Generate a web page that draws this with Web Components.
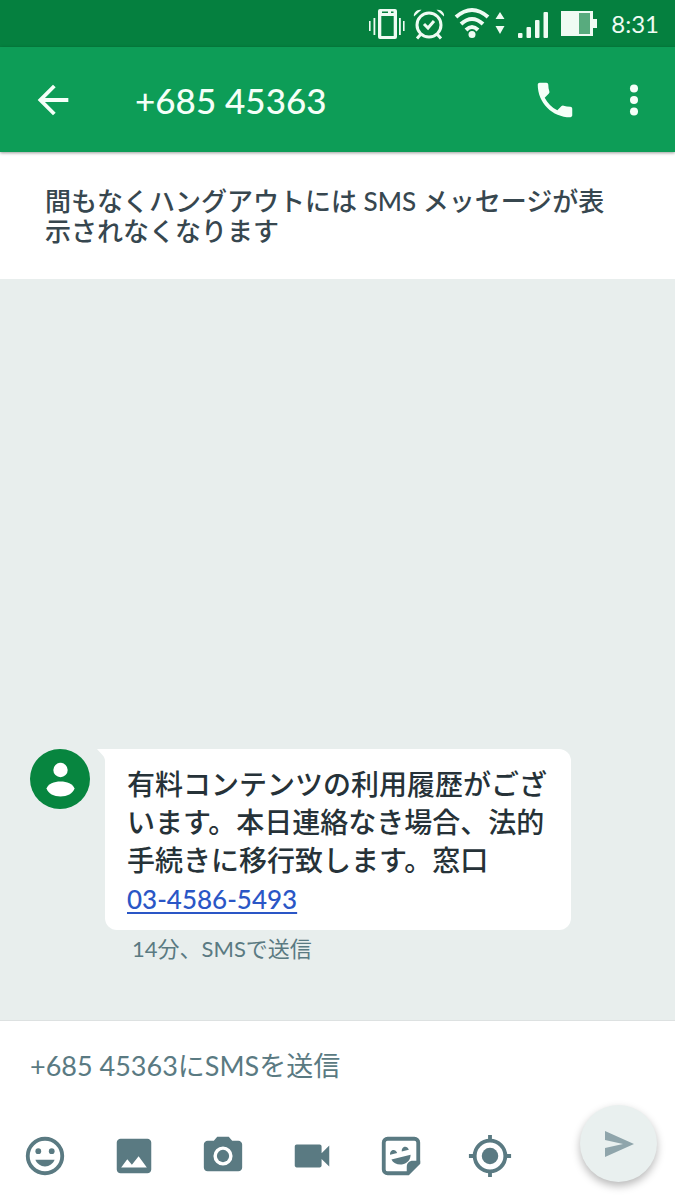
<!DOCTYPE html>
<html lang="ja">
<head>
<meta charset="utf-8">
<meta name="viewport" content="width=device-width, initial-scale=1">
<title>+685 45363</title>
<style>
    body {
        margin: 0;
        font-family: Lato, "Noto Sans CJK JP", sans-serif;
        color: #263238;
        --green: #0d9d57;
        --green-dark: #05803f;
        --slate: #5a7a82;
        --canvas: #e8eeed;
    }
</style>
</head>
<body>
<sms-screen>
    <status-bar slot="top" time="8:31"></status-bar>
    <app-bar slot="top">+685 45363</app-bar>
    <notice-banner slot="top">間もなくハングアウトには SMS メッセージが表示されなくなります</notice-banner>
    <chat-message meta="14分、SMSで送信">有料コンテンツの利用履歴がございます。本日連絡なき場合、法的手続きに移行致します。窓口 <a href="tel:0345865493">03-4586-5493</a></chat-message>
    <message-composer slot="bottom" hint="+685 45363にSMSを送信"></message-composer>
</sms-screen>

<script>
const icons = {
    back: `<path d="M20 11H7.8l5.6-5.6L12 4l-8 8 8 8 1.400-1.400L7.800 13H20z"/>`,
    call: `<path d="M6.620 10.790c1.440 2.830 3.760 5.140 6.590 6.590l2.200-2.200c.27-.27.67-.36 1.020-.24 1.120.37 2.330.57 3.570.57.55 0 1 .45 1 1V20c0 .55-.45 1-1 1-9.390 0-17-7.610-17-17 0-.55.45-1 1-1h3.500c.55 0 1 .45 1 1 0 1.250.2 2.450.57 3.570.11.35.03.74-.25 1.020z"/>`,
    more: `<circle cx="12" cy="6" r="2.1"/><circle cx="12" cy="12" r="2.1"/><circle cx="12" cy="18" r="2.1"/>`,
    emoji: `<circle cx="12" cy="12" r="9" fill="none" stroke="currentColor" stroke-width="2"/><circle cx="8.500" cy="9.500" r="1.500"/><circle cx="15.500" cy="9.500" r="1.500"/><path d="M7 14h10c-.8 2-2.700 3.500-5 3.500S7.800 16 7 14z"/>`,
    image: `<path d="M21 19V5c0-1.100-.9-2-2-2H5c-1.100 0-2 .9-2 2v14c0 1.100.9 2 2 2h14c1.100 0 2-.9 2-2zM5.300 18l3.200-4.300 2.400 2.900 3.500-4.500 4.300 5.900z"/>`,
    camera: `<circle cx="12" cy="12" r="3.200"/><path fill-rule="evenodd" d="M9 2 7.200 4H4c-1.100 0-2 .9-2 2v12c0 1.100.9 2 2 2h16c1.100 0 2-.9 2-2V6c0-1.100-.9-2-2-2h-3.200L15 2zM12 17a5 5 0 1 1 0-10 5 5 0 0 1 0 10z"/>`,
    video: `<path d="M17 10.500V7c0-.55-.45-1-1-1H4c-.55 0-1 .45-1 1v10c0 .55.45 1 1 1h12c.55 0 1-.45 1-1v-3.500l4 4v-11z"/>`,
    sticker: `<path d="M5 3h14a2 2 0 0 1 2 2v10.500L15.500 21H5a2 2 0 0 1-2-2V5a2 2 0 0 1 2-2z" fill="none" stroke="currentColor" stroke-width="2"/><path d="M15 21.500v-3.800c0-2 1.200-3.200 3.200-3.200h3.800v1.500L16 22z"/><path d="M6.300 11.300c-.3-2.600 2.800-3.500 3.700-.9zM12.400 9.600c-.3-2.600 2.800-3.500 3.700-.9zM7 13.800l10-2.400c0 2.600-1.600 4.400-4 4.900-2.400.5-5-.4-6-2.500z"/>`,
    location: `<circle cx="12" cy="12" r="4.3"/><circle cx="12" cy="12" r="8" fill="none" stroke="currentColor" stroke-width="2"/><path d="M11 1h2v3h-2zM11 20h2v3h-2zM1 11h3v2H1zM20 11h3v2h-3z"/>`
}

// size in pixels, every glyph is drawn on a 24 unit grid
function icon(name, size = 46) {
    return `<svg viewBox="0 0 24 24" width="${size}" height="${size}" fill="currentColor" aria-hidden="true">${icons[name]}</svg>`
}

const buttonStyle = `
    button {
        display: block;
        margin: 0;
        padding: 0;
        border: 0;
        background: none;
        color: inherit;
        font: inherit;
        cursor: pointer;
    }
    svg {
        display: block;
    }
`

class SmsScreen extends HTMLElement {
    constructor() {
        super()
        this.root = this.attachShadow({ mode: "open" })
        this.root.innerHTML = `
            <style>
            :host {
                display: flex;
                flex-direction: column;
                min-height: 100vh;
                background: var(--canvas);
            }
            main {
                flex: 1;
                display: flex;
                flex-direction: column;
                justify-content: flex-end;
                padding: 24px 30px 56px;
            }
            </style>
            <slot name="top"></slot>
            <main><slot></slot></main>
            <slot name="bottom"></slot>
        `
    }
}

class StatusBar extends HTMLElement {
    constructor() {
        super()
        this.root = this.attachShadow({ mode: "open" })
        this.root.innerHTML = `
            <style>
            :host {
                display: flex;
                align-items: center;
                justify-content: flex-end;
                height: 47px;
                padding: 0 16px;
                background: var(--green-dark);
                color: #effbf3;
                font-size: 24px;
                line-height: 30px;
            }
            .icons {
                display: flex;
                gap: 8px;
                margin-right: 14px;
            }
            svg {
                display: block;
            }
            </style>
            <div class="icons">
                <svg width="36" height="34" viewBox="0 0 36 34" fill="currentColor" aria-hidden="true">
                    <path fill-rule="evenodd" d="M11 2h15a2 2 0 0 1 2 2v26a2 2 0 0 1-2 2H11a2 2 0 0 1-2-2V4a2 2 0 0 1 2-2zM12.300 9v20h12.400V9zM13 4.500V6h6V4.500zM22 4.500V6h2.500V4.500z"/>
                    <path d="M0 14h1.600v10H0zM4.500 11h1.800v17H4.500zM30 11h1.800v17H30zM34 14h1.600v10H34z"/>
                </svg>
                <svg width="32" height="34" viewBox="1 0 32 34" fill="none" stroke="currentColor" stroke-width="3" aria-hidden="true">
                    <circle cx="17" cy="18" r="12"/>
                    <path d="M12 17l4 4 6-7M9 27l-4 4.500M25 27l4 4.500"/>
                    <path d="M2 9.500C1 6 5 2 9.500 2.800zM32 9.500c1-3.500-3-7.500-7.500-6.700z" fill="currentColor" stroke="none"/>
                </svg>
                <svg width="54" height="34" viewBox="0 0 54 34" fill="none" stroke="currentColor" stroke-width="4" aria-hidden="true">
                    <path d="M3 10q16-14 32 0M8 17q11-10 22 0M13 23q6-6 12 0"/>
                    <path d="M42.500 12l4.500-7 4.500 7zM42.500 19l4.500 8 4.500-8z" fill="currentColor" stroke="none"/>
                    <circle cx="19" cy="27.500" r="3.500" fill="currentColor" stroke="none"/>
                </svg>
                <svg width="34" height="34" viewBox="0 0 34 34" fill="currentColor" aria-hidden="true">
                    <rect x="3" y="26" width="4.500" height="5" rx="1"/>
                    <rect x="11.500" y="20" width="4.500" height="11" rx="1"/>
                    <rect x="20" y="13" width="4.500" height="18" rx="1"/>
                    <rect x="28.500" y="5" width="4.500" height="26" rx="1"/>
                </svg>
                <svg width="40" height="34" viewBox="0 0 40 34" fill="currentColor" aria-hidden="true">
                    <path d="M4 4h32v8h4v9h-4v8H4z"/>
                    <path d="M22 6h11v21H22z" fill="#58ab7e"/>
                </svg>
            </div>
            <time>${this.getAttribute("time")}</time>
        `
    }
}

class AppBar extends HTMLElement {
    constructor() {
        super()
        this.root = this.attachShadow({ mode: "open" })
        this.root.innerHTML = `
            <style>
            ${buttonStyle}
            :host {
                display: flex;
                align-items: center;
                height: 105px;
                padding: 0 18px 0 30px;
                box-sizing: border-box;
                background: var(--green);
                box-shadow: 0 1px 3px rgba(0, 0, 0, .4);
                position: relative;
                color: #f4fff8;
            }
            h1 {
                flex: 1;
                margin: 0 0 0 59px;
                font-size: 35px;
                font-weight: 500;
                line-height: 44px;
            }
            .actions {
                display: flex;
                gap: 33px;
            }
            </style>
            <button type="button" aria-label="戻る">${icon("back")}</button>
            <h1><slot></slot></h1>
            <div class="actions">
                <button type="button" aria-label="電話をかける">${icon("call")}</button>
                <button type="button" aria-label="その他">${icon("more")}</button>
            </div>
        `
    }
}

class NoticeBanner extends HTMLElement {
    constructor() {
        super()
        this.root = this.attachShadow({ mode: "open" })
        this.root.innerHTML = `
            <style>
            :host {
                display: block;
                padding: 34px 60px 33px 45px;
                background: #fff;
                color: #37474f;
                font-size: 26px;
                font-weight: 500;
                line-height: 30px;
            }
            </style>
            <slot></slot>
        `
    }
}

class ChatMessage extends HTMLElement {
    constructor() {
        super()
        this.root = this.attachShadow({ mode: "open" })
        this.root.innerHTML = `
            <style>
            :host {
                display: flex;
                align-items: flex-start;
                gap: 15px;
            }
            .avatar {
                display: block;
                flex: none;
            }
            .bubble {
                position: relative;
                max-width: 422px;
                padding: 16px 22px 12px;
                border-radius: 0 12px 12px 12px;
                background: #fff;
                font-size: 28px;
                font-weight: 500;
                line-height: 38px;
            }
            .tail {
                position: absolute;
                top: 0;
                right: 100%;
            }
            ::slotted(a) {
                color: #2a56c6;
                font-size: 26px;
                white-space: nowrap;
                text-decoration-thickness: 2px;
                text-underline-offset: 3px;
            }
            .meta {
                margin: 4px 0 0 27px;
                color: var(--slate);
                font-size: 22px;
                line-height: 30px;
            }
            </style>
            <svg class="avatar" width="60" height="60" viewBox="0 0 60 60" aria-hidden="true">
                <circle cx="30" cy="30" r="30" fill="#07853f"/>
                <circle cx="30.500" cy="21" r="7.200" fill="#fff"/>
                <path d="M16.500 39.500C18 35 24 32.500 30.500 32.500s12.500 2.500 14 7c-1.500 5-7.500 8-14 8s-12.500-3-14-8z" fill="#fff"/>
            </svg>
            <div>
                <div class="bubble">
                    <svg class="tail" width="8" height="12" viewBox="0 0 8 12" aria-hidden="true"><path d="M0 0h8v12C8 7 4 5 0 0z" fill="#fff"/></svg>
                    <slot></slot>
                </div>
                <div class="meta">${this.getAttribute("meta")}</div>
            </div>
        `
    }
}

class MessageComposer extends HTMLElement {
    constructor() {
        super()
        this.root = this.attachShadow({ mode: "open" })
        this.root.innerHTML = `
            <style>
            ${buttonStyle}
            :host {
                display: flex;
                align-items: flex-end;
                padding: 14px 18px 0 22px;
                border-top: 1px solid #dde1e1;
                background: #fff;
                color: var(--slate);
            }
            .main {
                flex: 1;
                min-width: 0;
                padding-bottom: 21px;
            }
            input {
                display: block;
                width: 100%;
                height: 60px;
                box-sizing: border-box;
                margin: 0 0 38px;
                padding: 0 8px;
                border: 0;
                outline: 0;
                background: none;
                color: #263238;
                font: inherit;
                font-size: 27px;
            }
            input::placeholder {
                color: var(--slate);
                opacity: 1;
            }
            .tools {
                display: flex;
                gap: 43px;
            }
            .send {
                display: grid;
                place-items: center;
                flex: none;
                width: 77px;
                height: 77px;
                margin-bottom: 18px;
                border-radius: 50%;
                background: #e9f0ef;
                box-shadow: 0 4px 8px rgba(0, 0, 0, .28);
                color: #8fa5ab;
            }
            </style>
            <div class="main">
                <input type="text" aria-label="メッセージ" placeholder="${this.getAttribute("hint")}">
                <div class="tools">
                    <button type="button" aria-label="絵文字">${icon("emoji")}</button>
                    <button type="button" aria-label="画像">${icon("image")}</button>
                    <button type="button" aria-label="カメラ">${icon("camera")}</button>
                    <button type="button" aria-label="動画">${icon("video")}</button>
                    <button type="button" aria-label="ステッカー">${icon("sticker")}</button>
                    <button type="button" aria-label="現在地">${icon("location")}</button>
                </div>
            </div>
            <button class="send" type="button" aria-label="送信">
                <svg width="30" height="26" viewBox="0 0 30 26" fill="currentColor" aria-hidden="true"><path d="M1 0l29 13L1 26v-9l18-4L1 9z"/></svg>
            </button>
        `
    }
}

window.customElements.define("sms-screen", SmsScreen)
window.customElements.define("status-bar", StatusBar)
window.customElements.define("app-bar", AppBar)
window.customElements.define("notice-banner", NoticeBanner)
window.customElements.define("chat-message", ChatMessage)
window.customElements.define("message-composer", MessageComposer)
</script>
</body>
</html>
